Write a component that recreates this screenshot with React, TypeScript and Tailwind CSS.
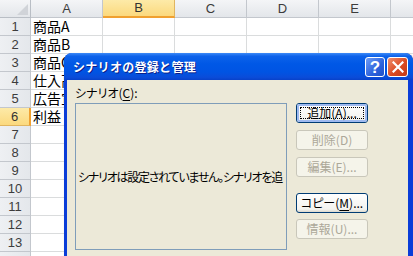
import React from 'react';

const COLS = ['A', 'B', 'C', 'D', 'E', 'F'];
const CELL_A: Record<number, string> = {
  1: '商品A',
  2: '商品B',
  3: '商品C',
  4: '仕入高',
  5: '広告宣伝費',
  6: '利益',
};

function HeaderRow() {
  return (
    <div className="flex h-[18px]">
      <div className="relative w-[31px] shrink-0 border-r border-b border-[#b9bec5] bg-[linear-gradient(#f4f5f7,#e3e6ea)]">
        <svg className="absolute left-[17px] top-[4px]" width="11" height="11" viewBox="0 0 11 11">
          <polygon points="11,0 11,11 0,11" fill="#d0d3d8" />
        </svg>
      </div>
      {COLS.map((c) =>
        c === 'B' ? (
          <div
            key={c}
            className="w-[72px] shrink-0 flex items-center justify-center border-r border-b-2 border-r-[#e0b560] border-b-[#f0a030] bg-[linear-gradient(#fdeaa8,#fbd97e)] text-[13px] text-[#333]"
          >
            {c}
          </div>
        ) : (
          <div
            key={c}
            className="w-[72px] shrink-0 flex items-center justify-center border-r border-b border-[#c3c7cd] bg-[linear-gradient(#f4f5f7,#e3e6ea)] text-[13px] text-[#3c3c3c]"
          >
            {c === 'F' ? '' : c}
          </div>
        )
      )}
    </div>
  );
}

function Row({ n }: { n: number }) {
  const sel = n === 6;
  return (
    <div className="flex h-[18px]">
      <div
        className={
          sel
            ? 'w-[31px] shrink-0 flex items-center justify-center border-r-2 border-b border-r-[#f0a030] border-b-[#e0b560] bg-[linear-gradient(#fdeaa8,#fbd97e)] text-[13px] text-[#333]'
            : 'w-[31px] shrink-0 flex items-center justify-center border-r border-b border-[#c3c7cd] bg-[linear-gradient(90deg,#eef0f3,#e4e7eb)] text-[13px] text-[#3c3c3c]'
        }
      >
        {n <= 13 ? n : ''}
      </div>
      {COLS.map((c) => (
        <div key={c} className="w-[72px] shrink-0 border-r border-b border-[#dadcdd] flex items-center">
          {c === 'A' && CELL_A[n] ? (
            <span className="pl-[2px] whitespace-nowrap text-[14px] leading-[17px] text-black font-['Noto_Sans_CJK_JP',sans-serif]">
              {CELL_A[n]}
            </span>
          ) : null}
        </div>
      ))}
    </div>
  );
}

function Btn({
  label,
  mn,
  after,
  disabled,
  def,
}: {
  label: string;
  mn: string;
  after: string;
  disabled?: boolean;
  def?: boolean;
}) {
  if (disabled) {
    return (
      <div className="w-[72px] h-[20px] rounded-[3px] border border-[#c9c7ba] bg-[#f5f4ea] flex items-center justify-center text-[12px] leading-none text-[#aca899]">
        {label}({mn}){after}
      </div>
    );
  }
  return (
    <div className="w-[72px] h-[20px] rounded-[3px] border border-[#003c74] bg-[linear-gradient(#ffffff,#f3f3ef_85%,#dcd8cc)] flex items-center justify-center text-[12px] leading-none text-black">
      {def ? (
        <div className="w-full h-full rounded-[2px] border-2 border-[#9fbaf0] flex items-center justify-center p-[1px]">
          <div className="w-full h-full border border-dotted border-black flex items-center justify-center">
            {label}({mn}){after}
          </div>
        </div>
      ) : (
        <span>
          {label}(<span className="underline underline-offset-[2px]">{mn}</span>){after}
        </span>
      )}
    </div>
  );
}

function Dialog() {
  return (
    <div className="absolute left-[64px] top-[53px] w-[349px] h-[215px] rounded-t-[8px] bg-[#0a3dd8] flex flex-col font-['Noto_Sans_CJK_JP',sans-serif] shadow-[1px_1px_2px_rgba(0,0,0,0.3)]">
      <div className="h-[27px] shrink-0 rounded-t-[8px] bg-[linear-gradient(#3d8af7_0%,#0d62ea_12%,#0058e6_40%,#0054e3_70%,#0a4cd9_90%,#0841c9_100%)] flex items-center pl-[9px] pr-[5px] pt-[1px]">
        <span className="text-[12px] font-bold text-white leading-none [text-shadow:1px_1px_0_#0a1f8a] tracking-[0.3px]">
          シナリオの登録と管理
        </span>
        <div className="ml-auto flex gap-[2px]">
          <div className="w-[20px] h-[20px] rounded-[3px] border border-white bg-[linear-gradient(135deg,#6f9df7,#2c62dc_60%,#1f4fc8)] flex items-center justify-center text-white text-[17px] font-bold leading-none font-['Liberation_Sans',sans-serif]">
            ?
          </div>
          <div className="w-[21px] h-[20px] rounded-[3px] border border-white bg-[linear-gradient(135deg,#f08f6e,#db4a22_55%,#c23a16)] flex items-center justify-center">
            <svg width="12" height="12" viewBox="0 0 12 12">
              <path d="M1.5 1.5 L10.5 10.5 M10.5 1.5 L1.5 10.5" stroke="white" strokeWidth="2.2" strokeLinecap="square" />
            </svg>
          </div>
        </div>
      </div>
      <div className="flex-1 ml-[3px] mr-[5px] bg-[#ece9d8] flex [font-feature-settings:'palt']">
        <div className="pl-[8px] flex flex-col">
          <div className="mt-[6px] h-[17px] text-[12px] leading-[14px] text-black">
            シナリオ(<span className="underline underline-offset-[2px]">C</span>):
          </div>
          <div className="w-[212px] h-[147px] border border-[#7f9db9] bg-[#ece9d8] flex items-center overflow-hidden pl-[2px]">
            <span className="whitespace-nowrap text-[12px] leading-none tracking-[-1.25px] text-black">
              シナリオは設定されていません。シナリオを追
            </span>
          </div>
        </div>
        <div className="ml-[9px] mt-[23px] flex flex-col">
          <Btn label="追加" mn="A" after="..." def />
          <div className="h-[7px]" />
          <Btn label="削除" mn="D" after="" disabled />
          <div className="h-[7px]" />
          <Btn label="編集" mn="E" after="..." disabled />
          <div className="h-[16px]" />
          <Btn label="コピー" mn="M" after="..." />
          <div className="h-[6px]" />
          <Btn label="情報" mn="U" after="..." disabled />
        </div>
      </div>
    </div>
  );
}

export default function App() {
  const rows = Array.from({ length: 14 }, (_, i) => i + 1);
  return (
    <div className="relative w-[413px] h-[256px] overflow-hidden bg-white font-['Liberation_Sans',sans-serif]">
      <HeaderRow />
      {rows.map((n) => (
        <Row key={n} n={n} />
      ))}
      <Dialog />
    </div>
  );
}
